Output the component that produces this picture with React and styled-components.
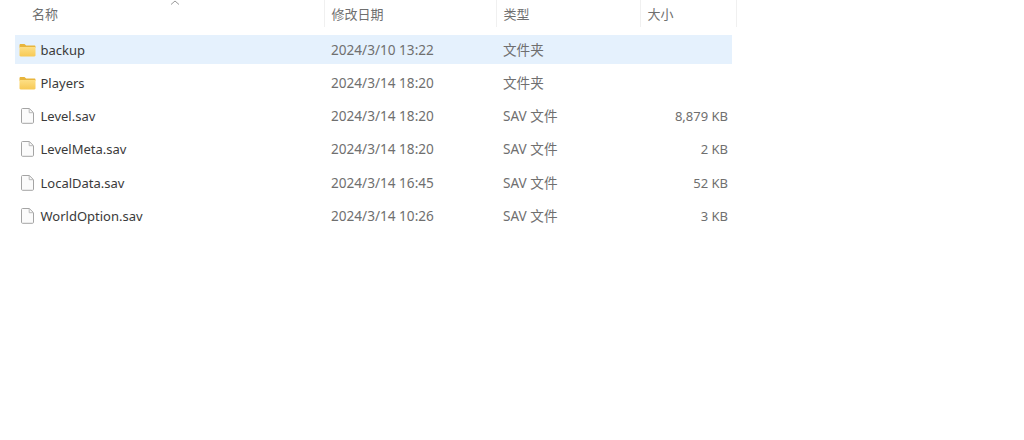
import React from 'react';
import styled, { createGlobalStyle } from 'styled-components';

const GlobalStyle = createGlobalStyle`
  html, body {
    margin: 0;
    background: #fff;
  }
  body {
    font-family: "Noto Sans", "Noto Sans CJK SC", sans-serif;
    font-size: 13.6px;
    line-height: 18px;
  }
`;

const Page = styled.div`
  width: 1024px;
  height: 440px;
  overflow: hidden;
  background: #fff;
`;

const Header = styled.div`
  display: grid;
  grid-template-columns: 310px 172px 144px 96px;
  height: 27px;
  margin-left: 15px;
  margin-bottom: 8px;
`;

const HeaderCell = styled.div`
  position: relative;
  display: flex;
  align-items: center;
  height: 27px;
  padding-left: ${(p) => p.$indent}px;
  color: #6f6f6f;
  font-size: 13px;
  box-shadow: inset -1px 0 0 #f0f0f0;
`;

const SortArrow = styled.svg`
  position: absolute;
  top: 0;
  left: 155px;
`;

const List = styled.div`
  display: flex;
  flex-direction: column;
  gap: 4.3px;
  margin-left: 15px;
  width: 717px;
`;

const Row = styled.div`
  display: grid;
  grid-template-columns: 310px 172px 143px 92px;
  align-items: center;
  height: 29px;
  background: ${(p) => (p.$selected ? '#e5f1fd' : 'transparent')};
`;

const NameCell = styled.div`
  display: flex;
  align-items: center;
  gap: 4.5px;
  padding-left: 4px;
  font-size: 13px;
  color: #3a3a3a;
`;

const IconSlot = styled.span`
  display: flex;
  width: 17px;
  justify-content: center;
`;

const TextCell = styled.div`
  padding-left: 6px;
  color: #6f6f6f;
`;

const SizeCell = styled.div`
  padding-right: 4px;
  text-align: right;
  font-size: 13px;
  color: #6f6f6f;
`;

const FolderIcon = () => (
  <svg width="17" height="14" viewBox="0 0 17 14">
    <defs>
      <linearGradient id="folderBody" x1="0" y1="0" x2="0" y2="1">
        <stop offset="0" stopColor="#fddf85" />
        <stop offset="1" stopColor="#f7c955" />
      </linearGradient>
    </defs>
    <path d="M0.5 2.2c0-.8.5-1.2 1.2-1.2h3.8l1.7 1.6h8.2c.6 0 1.1.5 1.1 1.1v1H0.5z" fill="#e8b53c" />
    <path d="M0.5 4h16v8.2c0 .7-.5 1.2-1.2 1.2H1.7c-.7 0-1.2-.5-1.2-1.2z" fill="url(#folderBody)" />
  </svg>
);

const FileIcon = () => (
  <svg width="13" height="16" viewBox="0 0 13 16">
    <path
      d="M1.5 0.5h6.8l4.2 4.2v9.6c0 .6-.4 1-1 1h-10c-.6 0-1-.4-1-1V1.5c0-.6.4-1 1-1z"
      fill="#fbfbfb"
      stroke="#a4a4a4"
    />
    <path d="M8.2 0.7v4h4" fill="none" stroke="#b8b8b8" />
  </svg>
);

const files = [
  { name: 'backup', date: '2024/3/10 13:22', type: '文件夹', size: '', folder: true, selected: true },
  { name: 'Players', date: '2024/3/14 18:20', type: '文件夹', size: '', folder: true },
  { name: 'Level.sav', date: '2024/3/14 18:20', type: 'SAV 文件', size: '8,879 KB' },
  { name: 'LevelMeta.sav', date: '2024/3/14 18:20', type: 'SAV 文件', size: '2 KB' },
  { name: 'LocalData.sav', date: '2024/3/14 16:45', type: 'SAV 文件', size: '52 KB' },
  { name: 'WorldOption.sav', date: '2024/3/14 10:26', type: 'SAV 文件', size: '3 KB' },
];

const App = () => {
  return (
    <Page>
      <GlobalStyle />
      <Header>
        <HeaderCell $indent={17}>
          名称
          <SortArrow width="10" height="6" viewBox="0 0 10 6">
            <path d="M1 4.5 5 1l4 3.5" fill="none" stroke="#9a9a9a" />
          </SortArrow>
        </HeaderCell>
        <HeaderCell $indent={6.5}>修改日期</HeaderCell>
        <HeaderCell $indent={6.5}>类型</HeaderCell>
        <HeaderCell $indent={6.5}>大小</HeaderCell>
      </Header>
      <List>
        {files.map((file) => (
          <Row key={file.name} $selected={file.selected}>
            <NameCell>
              <IconSlot>{file.folder ? <FolderIcon /> : <FileIcon />}</IconSlot>
              {file.name}
            </NameCell>
            <TextCell>{file.date}</TextCell>
            <TextCell>{file.type}</TextCell>
            <SizeCell>{file.size}</SizeCell>
          </Row>
        ))}
      </List>
    </Page>
  );
};

export default App;
